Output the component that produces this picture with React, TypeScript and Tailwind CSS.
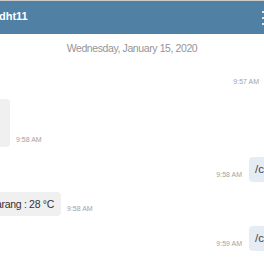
import React from 'react';

type Msg = {
  id: number;
  side: 'in' | 'out';
  time: string;
  lines: string[];
};

const messages: Msg[] = [
  { id: 1, side: 'out', time: '9:57 AM', lines: ['/start'] },
  { id: 2, side: 'in', time: '9:58 AM', lines: ['Selamat datang di bot dht11', 'Ketik /c untuk cek suhu'] },
  { id: 3, side: 'out', time: '9:58 AM', lines: ['/cek'] },
  { id: 4, side: 'in', time: '9:58 AM', lines: ['Suhu sekarang : 28 °C'] },
  { id: 5, side: 'out', time: '9:59 AM', lines: ['/cek'] },
];

const Time: React.FC<{ value: string }> = ({ value }) => (
  <span className="mb-[3px] shrink-0 whitespace-nowrap text-[7px] leading-[9px] text-[#a3a3a3]">{value}</span>
);

export default function App() {
  return (
    <div className="h-[264px] w-[264px] overflow-hidden bg-white font-['Liberation_Sans',Arial,sans-serif]">
      <div className="flex h-[34px] items-center justify-between border-t border-[#c9c9c9] bg-[#5081a5]">
        <span className="-ml-[1px] -mt-[3px] text-[11px] font-bold text-white">dht11</span>
        <div className="flex flex-col gap-[4px]">
          <span className="h-[2px] w-[2px] bg-white/80" />
          <span className="h-[2px] w-[2px] bg-white/80" />
          <span className="h-[2px] w-[2px] bg-white/80" />
        </div>
      </div>

      <div className="mt-[7px] text-center text-[10.5px] leading-[14px] tracking-[-0.4px] text-[#959595]">
        Wednesday, January 15, 2020
      </div>

      <div className="mt-[9px] flex flex-col gap-[10px]">
        {messages.map((m, i) =>
          m.side === 'out' ? (
            <div key={m.id} className="flex items-end justify-end gap-[7px]">
              <Time value={m.time} />
              <div
                className={
                  'w-[60px] shrink-0 rounded-[4px] bg-[#e5ecf4] px-[6px] py-[6px] text-[11.5px] leading-[13px] text-[#444] ' +
                  (i === 0 ? '-mr-[62px]' : '-mr-[45px]')
                }
              >
                {m.lines[0]}
              </div>
            </div>
          ) : (
            <div key={m.id} className="flex items-end gap-[6px]">
              <div
                className={
                  'shrink-0 rounded-[4px] bg-[#f0f0f0] py-[6px] pr-[7px] text-right text-[10.5px] leading-[12px] tracking-[-0.3px] text-[#333] ' +
                  (m.lines.length > 1 ? 'w-[220px] -ml-[210px] pr-[20px]' : 'w-[200px] -ml-[139px]')
                }
              >
                {m.lines.map((l) => (
                  <div key={l} className={m.lines.length > 1 ? 'leading-[18px]' : ''}>
                    {l}
                  </div>
                ))}
              </div>
              <Time value={m.time} />
            </div>
          )
        )}
        <div className="flex">
          <div className="-ml-[103px] mt-[4px] h-[30px] w-[200px] shrink-0 rounded-[4px] border-t border-[#e2e2e2] bg-[#f4f4f4]" />
        </div>
      </div>
    </div>
  );
}
